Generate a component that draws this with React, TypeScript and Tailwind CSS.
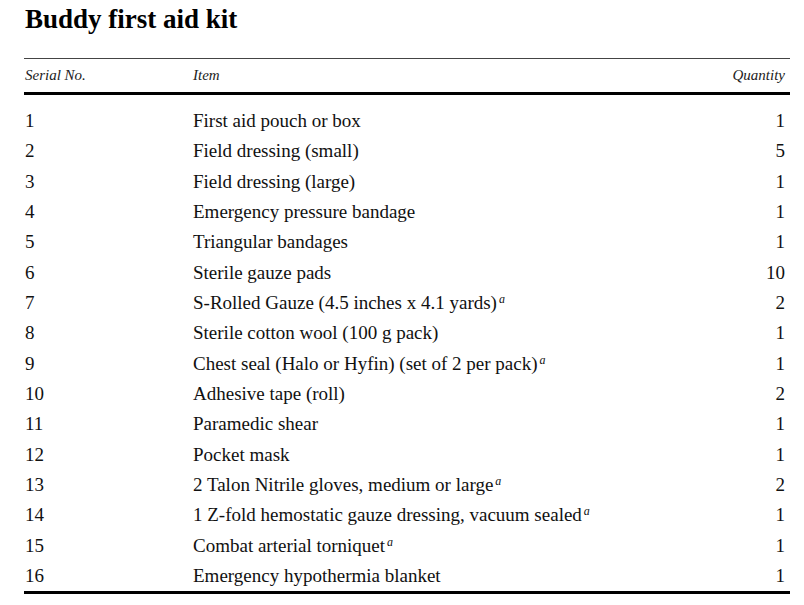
import React from "react";

const rows: { item: React.ReactNode; qty: string }[] = [
  { item: "First aid pouch or box", qty: "1" },
  { item: "Field dressing (small)", qty: "5" },
  { item: "Field dressing (large)", qty: "1" },
  { item: "Emergency pressure bandage", qty: "1" },
  { item: "Triangular bandages", qty: "1" },
  { item: "Sterile gauze pads", qty: "10" },
  { item: <>S-Rolled Gauze (4.5 inches x 4.1 yards)<Sup /></>, qty: "2" },
  { item: "Sterile cotton wool (100 g pack)", qty: "1" },
  { item: <>Chest seal (Halo or Hyfin) (set of 2 per pack)<Sup /></>, qty: "1" },
  { item: "Adhesive tape (roll)", qty: "2" },
  { item: "Paramedic shear", qty: "1" },
  { item: "Pocket mask", qty: "1" },
  { item: <>2 Talon Nitrile gloves, medium or large<Sup /></>, qty: "2" },
  { item: <>1 Z-fold hemostatic gauze dressing, vacuum sealed<Sup /></>, qty: "1" },
  { item: <>Combat arterial torniquet<Sup /></>, qty: "1" },
  { item: "Emergency hypothermia blanket", qty: "1" },
];

function Sup() {
  return <span className="italic text-[12px] leading-none ml-[2px] relative -top-[6px]">a</span>;
}

export default function App() {
  return (
    <div className="w-[804px] h-[605px] bg-white text-black font-['Liberation_Serif',serif] pl-[24px] pr-[14px] pt-[2px]">
      <h1 className="font-bold text-[27px] leading-[34px] pl-[1px]">Buddy first aid kit</h1>
      <div className="mt-[22px] border-t border-[#444]">
        <div className="h-[33px] flex items-center italic text-[15px] text-[#222]">
          <div className="w-[169px] pl-[1px]">Serial No.</div>
          <div className="flex-1">Item</div>
          <div className="pr-[5px]">Quantity</div>
        </div>
        <div className="border-t-[3px] border-black" />
        <div className="pt-[11px]">
          {rows.map((r, i) => (
            <div key={i} className="h-[30.33px] flex items-center text-[19px] leading-[22px] text-[#111]">
              <div className="w-[169px] pl-[1px]">{i + 1}</div>
              <div className="flex-1">{r.item}</div>
              <div className="pr-[5px]">{r.qty}</div>
            </div>
          ))}
        </div>
        <div className="border-t-[3px] border-black" />
      </div>
    </div>
  );
}
